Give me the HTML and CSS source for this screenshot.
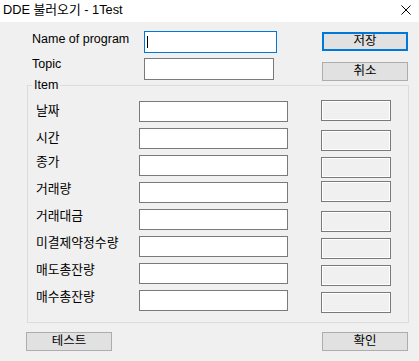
FILE: index.html
```html
<!DOCTYPE html>
<html lang="ko">
<head>
    <meta charset="UTF-8">
    <title>DDE 불러오기 - 1Test</title>
    <link rel="stylesheet" href="styles.css">
</head>
<body>
    <div class="titlebar">
        <span class="title">DDE 불러오기 - 1Test</span>
        <svg class="close" width="10" height="10" viewBox="0 0 10 10">
            <path d="M0.5 0.5 L9.5 9.5 M9.5 0.5 L0.5 9.5" stroke="#000" stroke-width="1" fill="none"/>
        </svg>
    </div>

    <div class="dialog">
        <div class="top">
            <div class="form">
                <label class="form-label">Name of program</label>
                <span class="field-wrap">
                    <input class="field field-focus name-field" type="text">
                    <span class="caret"></span>
                </span>
                <label class="form-label topic-label">Topic</label>
                <input class="field topic-field" type="text">
            </div>
            <div class="actions">
                <button class="btn btn-default">저장</button>
                <button class="btn">취소</button>
            </div>
        </div>

        <div class="group">
            <span class="legend">Item</span>
            <div class="row"><label class="item-label low">날짜</label><input class="field item-field"><div class="box up"></div></div>
            <div class="row"><label class="item-label low">시간</label><input class="field item-field"><div class="box"></div></div>
            <div class="row"><label class="item-label">종가</label><input class="field item-field"><div class="box"></div></div>
            <div class="row"><label class="item-label">거래량</label><input class="field item-field"><div class="box up"></div></div>
            <div class="row"><label class="item-label">거래대금</label><input class="field item-field"><div class="box"></div></div>
            <div class="row"><label class="item-label">미결제약정수량</label><input class="field item-field"><div class="box"></div></div>
            <div class="row"><label class="item-label">매도총잔량</label><input class="field item-field"><div class="box"></div></div>
            <div class="row"><label class="item-label">매수총잔량</label><input class="field item-field"><div class="box"></div></div>
        </div>

        <div class="bottom">
            <button class="btn">테스트</button>
            <button class="btn">확인</button>
        </div>
    </div>
</body>
</html>
```

FILE: styles.css
```css
body {
    margin: 0;
    width: 419px;
    height: 361px;
    background: #f0f0f0;
    color: #000;
    font-family: "Liberation Sans", "Noto Sans CJK KR", sans-serif;
    font-size: 12px;
}

.titlebar {
    height: 22px;
    background: #fff;
    display: flex;
    align-items: flex-start;
    justify-content: space-between;
    padding: 0 8px 0 3px;
}
.title {
    font-size: 12.8px;
    line-height: 14px;
    margin-top: 3px;
}
.close {
    margin-top: 5px;
}

.dialog {
    height: 339px;
}

/* top part */
.top {
    display: flex;
    padding: 9px 0 0 32px;
}
.form {
    display: grid;
    grid-template-columns: 112px auto;
    row-gap: 3px;
    align-items: start;
}
.form-label {
    font-size: 12.5px;
    line-height: 15px;
    margin-top: 1px;
}
.topic-label {
    margin-top: -1px;
}
.field {
    box-sizing: border-box;
    margin: 0;
    padding: 0;
    height: 22px;
    border: 1px solid #7a7a7a;
    background: #fff;
    outline: none;
}
.field-wrap {
    position: relative;
    display: block;
    height: 22px;
}
.field-focus {
    border-color: #0078d7;
}
.name-field {
    width: 133px;
}
.topic-field {
    width: 130px;
}
.caret {
    position: absolute;
    left: 3px;
    top: 5px;
    width: 1px;
    height: 12px;
    background: #000;
}

.actions {
    display: flex;
    flex-direction: column;
    gap: 11px;
    margin-left: 45px;
    padding-top: 1px;
}

.btn {
    box-sizing: border-box;
    width: 86px;
    height: 19px;
    margin: 0;
    padding: 0;
    border: 1px solid #adadad;
    background: #e1e1e1;
    color: #000;
    font-family: "Liberation Sans", "Noto Sans CJK KR", sans-serif;
    font-size: 12.5px;
    line-height: 15px;
}
.btn-default {
    border: 2px solid #0078d7;
}

/* item group */
.group {
    position: relative;
    box-sizing: border-box;
    width: 382px;
    height: 238px;
    margin: 4px 0 0 27px;
    padding: 15px 0 0 8px;
    border: 1px solid #dcdcdc;
}
.legend {
    position: absolute;
    left: 4px;
    top: -8px;
    padding: 0 2px;
    background: #f0f0f0;
    font-size: 12.5px;
    line-height: 15px;
}
.row {
    display: flex;
    align-items: flex-start;
    height: 21px;
    margin-bottom: 6px;
}
.item-label {
    width: 103px;
    font-size: 12.8px;
    line-height: 14px;
}
.item-label.low {
    margin-top: 3px;
}
.item-field {
    width: 149px;
    height: 21px;
}
.box {
    box-sizing: border-box;
    width: 70px;
    height: 21px;
    margin: 2px 0 0 33px;
    border: 1px solid #7a7a7a;
    box-shadow: inset 0 0 0 1px #fff;
    background: #f0f0f0;
}
.box.up {
    margin-top: -1px;
}

.bottom {
    display: flex;
    justify-content: space-between;
    width: 382px;
    margin: 9px 0 0 26px;
}
```
